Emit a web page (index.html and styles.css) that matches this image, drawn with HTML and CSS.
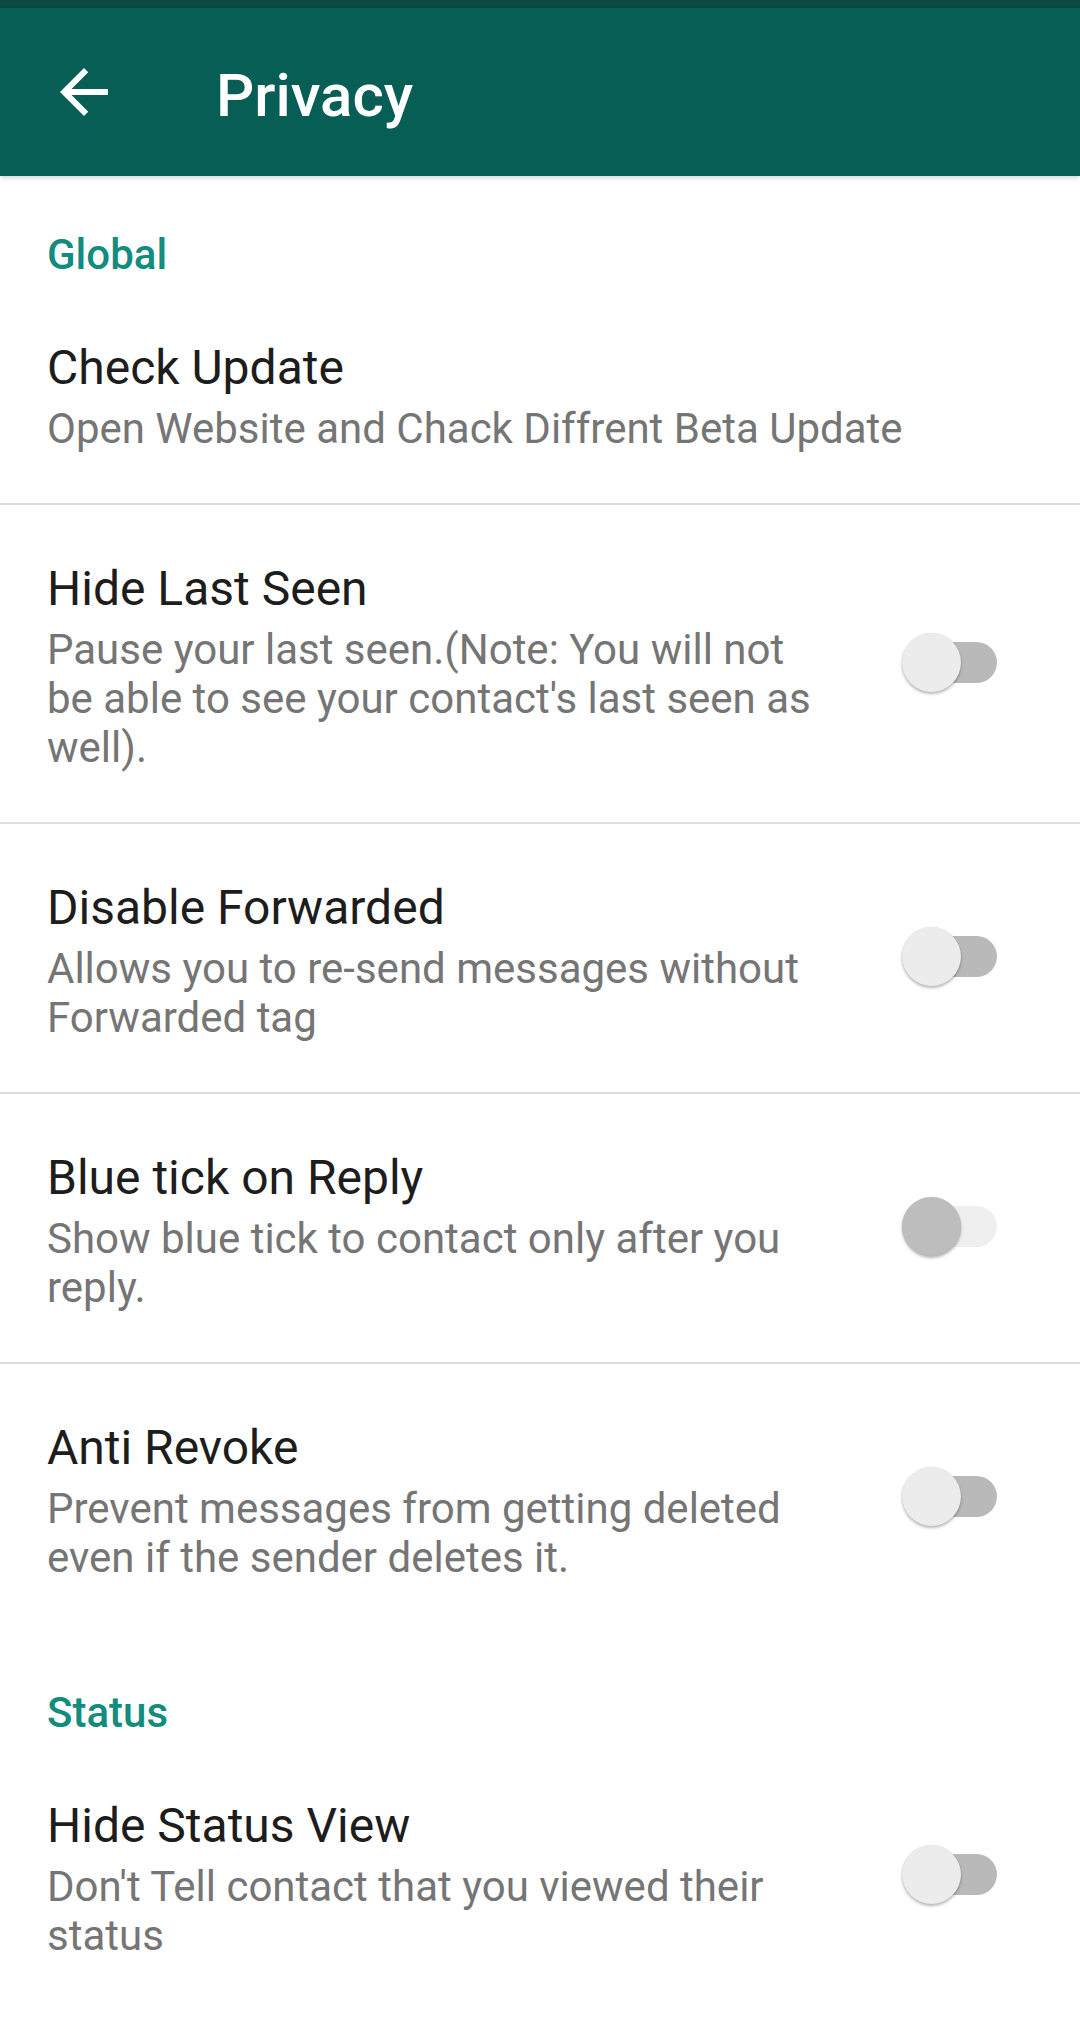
FILE: index.html
```html
<!DOCTYPE html>
<html lang="en">
<head>
<meta charset="utf-8">
<title>Privacy</title>
<link rel="stylesheet" href="styles.css">
</head>
<body>
<div class="statusbar"></div>
<header class="appbar">
  <svg class="back" viewBox="0 0 24 24" aria-hidden="true"><path d="M20 11H7.83l5.59-5.59L12 4l-8 8 8 8 1.41-1.41L7.83 13H20v-2z"/></svg>
  <h1 class="title">Privacy</h1>
</header>
<main class="list">
  <section class="group">
    <h2 class="group-title">Global</h2>
    <div class="row">
      <div class="text">
        <div class="row-title">Check Update</div>
        <div class="row-sub">Open Website and Chack Diffrent Beta Update</div>
      </div>
    </div>
    <div class="row">
      <div class="text narrow">
        <div class="row-title">Hide Last Seen</div>
        <div class="row-sub">Pause your last seen.(Note: You will not be able to see your contact's last seen as well).</div>
      </div>
      <div class="switch"><span class="track"></span><span class="thumb"></span></div>
    </div>
    <div class="row">
      <div class="text narrow">
        <div class="row-title">Disable Forwarded</div>
        <div class="row-sub">Allows you to re-send messages without Forwarded tag</div>
      </div>
      <div class="switch"><span class="track"></span><span class="thumb"></span></div>
    </div>
    <div class="row">
      <div class="text narrow">
        <div class="row-title">Blue tick on Reply</div>
        <div class="row-sub">Show blue tick to contact only after you reply.</div>
      </div>
      <div class="switch disabled"><span class="track"></span><span class="thumb"></span></div>
    </div>
    <div class="row">
      <div class="text narrow">
        <div class="row-title">Anti Revoke</div>
        <div class="row-sub">Prevent messages from getting deleted even if the sender deletes it.</div>
      </div>
      <div class="switch"><span class="track"></span><span class="thumb"></span></div>
    </div>
  </section>
  <section class="group">
    <h2 class="group-title">Status</h2>
    <div class="row">
      <div class="text narrow">
        <div class="row-title">Hide Status View</div>
        <div class="row-sub">Don't Tell contact that you viewed their status</div>
      </div>
      <div class="switch"><span class="track"></span><span class="thumb"></span></div>
    </div>
  </section>
</main>
</body>
</html>
```
FILE: styles.css
```css
* { box-sizing: border-box; }
html, body {
  margin: 0;
  padding: 0;
  background: #ffffff;
  font-family: Roboto, "Noto Sans", "Liberation Sans", sans-serif;
}
.statusbar {
  height: 8px;
  background: #0a4a43;
}
.appbar {
  position: relative;
  z-index: 1;
  height: 168px;
  background: #075e54;
  display: flex;
  align-items: center;
  box-shadow: 0 2px 5px rgba(0, 0, 0, 0.16);
}
.back {
  width: 72px;
  height: 72px;
  margin-left: 48px;
  fill: #ffffff;
  flex: none;
}
.title {
  margin: 0 0 0 96px;
  padding-top: 6px;
  color: #ffffff;
  font-size: 60px;
  font-weight: 500;
  letter-spacing: 0;
}
.list {
  display: flex;
  flex-direction: column;
}
.group-title {
  margin: 0;
  padding: 55px 47px 5px;
  font-size: 42px;
  line-height: 48px;
  font-weight: 500;
  color: #128c7e;
}
.row {
  display: flex;
  align-items: center;
  padding: 56px 83px 50px 47px;
  border-bottom: 2px solid #dedede;
}
.row:last-child {
  border-bottom-color: transparent;
}
.text {
  flex: 1;
  min-width: 0;
}
.text.narrow {
  margin-right: 70px;
}
.row-title {
  font-size: 48px;
  line-height: 56px;
  color: #1d1d1d;
}
.row-sub {
  margin-top: 8px;
  font-size: 42px;
  line-height: 49px;
  color: #757575;
}
.switch {
  position: relative;
  flex: none;
  width: 95px;
  height: 59px;
  margin-bottom: 9px;
}
.track {
  position: absolute;
  left: 6px;
  right: 0;
  top: 9px;
  height: 41px;
  border-radius: 21px;
  background: #b9b9b9;
}
.thumb {
  position: absolute;
  left: 0;
  top: 0;
  width: 59px;
  height: 59px;
  border-radius: 50%;
  background: #ececec;
  box-shadow: 0 2px 3px rgba(0, 0, 0, 0.28), 0 0 1px rgba(0, 0, 0, 0.12);
}
.switch.disabled .track {
  background: #efefef;
}
.switch.disabled .thumb {
  background: #bdbdbd;
}
```
